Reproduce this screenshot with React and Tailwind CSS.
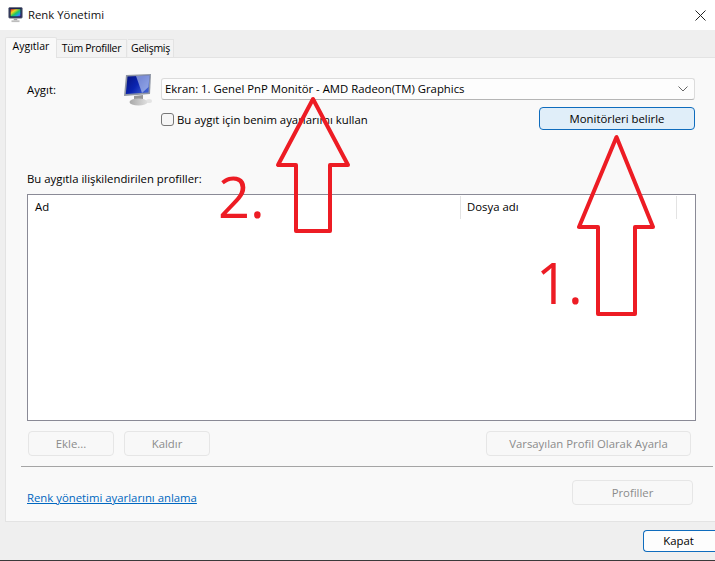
import React from "react";

function TitleIcon() {
  return (
    <svg width="15" height="16" viewBox="0 0 16 18" className="shrink-0">
      <defs>
        <linearGradient id="rb" x1="0" y1="0" x2="1" y2="1">
          <stop offset="0" stopColor="#f02020" />
          <stop offset="0.3" stopColor="#f0d820" />
          <stop offset="0.55" stopColor="#20c860" />
          <stop offset="0.8" stopColor="#20a0f0" />
          <stop offset="1" stopColor="#9020e0" />
        </linearGradient>
      </defs>
      <rect x="0.5" y="0.5" width="15" height="12" rx="1" fill="#1c2550" stroke="#6a6f80" />
      <rect x="2.5" y="2.5" width="11" height="8" fill="url(#rb)" />
      <rect x="6" y="13" width="4" height="2" fill="#a0a0a0" />
      <rect x="3.5" y="15" width="9" height="2" fill="#bdbdbd" />
    </svg>
  );
}

function MonitorIcon() {
  return (
    <svg width="30" height="34" viewBox="0 0 30 34" className="shrink-0">
      <defs>
        <linearGradient id="sc" x1="0" y1="0" x2="1" y2="0.6">
          <stop offset="0" stopColor="#06127e" />
          <stop offset="0.55" stopColor="#0a24b0" />
          <stop offset="1" stopColor="#3c5cd0" />
        </linearGradient>
        <linearGradient id="st" x1="0" y1="0" x2="1" y2="0">
          <stop offset="0" stopColor="#a8a8a8" />
          <stop offset="1" stopColor="#e0e0e0" />
        </linearGradient>
      </defs>
      <path d="M3 2 L28 1 L27 21 L1 23 Z" fill="#8e95a3" />
      <path d="M4.5 3.5 L26.5 2.5 L25.5 19.5 L2.8 21 Z" fill="url(#sc)" />
      <path d="M13 3 L26.5 2.5 L25.5 14 L19 20 Z" fill="#c4d2f2" opacity="0.6" />
      <path d="M11 23 L20 22 L20 27 L11 27 Z" fill="#979797" />
      <ellipse cx="15.5" cy="29" rx="9" ry="3.6" fill="url(#st)" />
      <ellipse cx="26" cy="28" rx="3" ry="2" fill="#dcdcdc" opacity="0.7" />
    </svg>
  );
}

function Btn({ className, children }) {
  return (
    <div className={"flex items-center justify-center rounded-[4px] border border-[#e6e6e6] bg-[#f8f8f8] text-[#8b8b8b] " + className}>
      {children}
    </div>
  );
}

export default function App() {
  return (
    <div className="relative flex h-[561px] w-[715px] flex-col overflow-hidden bg-[#efefef] text-[11.35px] text-black [font-family:'Open_Sans','Noto_Sans',sans-serif]">
      <div className="flex h-[30px] shrink-0 items-center bg-white pl-[8px] pr-[9px]">
        <TitleIcon />
        <span className="ml-[5px] text-[#111]">Renk Yönetimi</span>
        <svg width="11" height="11" viewBox="0 0 11 11" className="ml-auto" stroke="#222" strokeWidth="1" fill="none">
          <path d="M0.5 0.5 L10.5 10.5 M10.5 0.5 L0.5 10.5" />
        </svg>
      </div>

      <div className="z-10 flex h-[27px] shrink-0 items-end pl-[5px]">
        <div className="mb-[-1px] flex h-[21px] w-[52px] items-center justify-center rounded-t-[2px] border border-b-0 border-[#e3e3e3] bg-[#f9f9f9] pb-[2px] text-[10.5px]">Aygıtlar</div>
        <div className="flex h-[18px] w-[70px] items-center justify-center border border-b-0 border-l-0 border-[#e3e3e3] bg-[#f3f3f3] text-[10.5px] tracking-[-0.3px]">Tüm Profiller</div>
        <div className="ml-px flex h-[18px] w-[46px] items-center justify-center border border-b-0 border-l-0 border-[#e3e3e3] bg-[#f3f3f3] text-[10.5px] tracking-[-0.3px]">Gelişmiş</div>
      </div>

      <div className="ml-[5px] flex h-[465px] shrink-0 flex-col border border-r-0 border-[#e3e3e3] bg-[#f9f9f9] pl-[21px] pt-[20px]">
        <div className="flex h-[53px] shrink-0">
          <span className="mt-[3px] w-[96px] shrink-0">Aygıt:</span>
          <div className="mt-[-5px] w-[38px] shrink-0"><MonitorIcon /></div>
          <div className="flex w-[534px] shrink-0 flex-col">
            <div className="flex h-[22px] items-center justify-between rounded-[3px] border border-[#dcdcdc] border-b-[#b5b5b5] bg-[#fdfdfd] pl-[3px] pr-[6px]">
              <span>Ekran: 1. Genel PnP Monitör - AMD Radeon(TM) Graphics</span>
              <svg width="10" height="6" viewBox="0 0 10 6" fill="none" stroke="#666" strokeWidth="1"><path d="M0.5 0.5 L5 5 L9.5 0.5" /></svg>
            </div>
            <div className="mt-[7px] flex items-start justify-between">
              <label className="mt-[4px] flex items-center">
                <span className="h-[13px] w-[13px] rounded-[3px] border border-[#777] bg-[#f6f6f6]" />
                <span className="ml-[3px]">Bu aygıt için benim ayarlarımı kullan</span>
              </label>
              <div className="flex h-[23px] w-[156px] items-center justify-center rounded-[4px] border border-[#0f6cbd] bg-[#e0eef9]">Monitörleri belirle</div>
            </div>
          </div>
        </div>

        <div className="mt-[39px] h-[24px] shrink-0">Bu aygıtla ilişkilendirilen profiller:</div>

        <div className="h-[227px] w-[669px] shrink-0 border border-[#8a8a96] bg-white">
          <div className="flex h-[24px] items-center">
            <span className="w-[432px] pl-[7px]">Ad</span>
            <span className="h-[23px] w-px bg-[#e3e3e3]" />
            <span className="w-[215px] pl-[6px]">Dosya adı</span>
            <span className="h-[23px] w-px bg-[#e3e3e3]" />
          </div>
        </div>

        <div className="mt-[10px] flex h-[25px] shrink-0 items-stretch pl-px">
          <Btn className="w-[86px]">Ekle...</Btn>
          <Btn className="ml-[10px] w-[86px]">Kaldır</Btn>
          <Btn className="ml-[276px] w-[205px]">Varsayılan Profil Olarak Ayarla</Btn>
        </div>

        <div className="ml-[-6px] mt-[10px] h-px w-[692px] shrink-0 bg-[#a5a5a5]" />

        <div className="mt-[13px] flex h-[25px] shrink-0 items-stretch">
          <a className="mt-[9px] w-[545px] text-[#0067c0] underline">Renk yönetimi ayarlarını anlama</a>
          <Btn className="w-[121px]">Profiller</Btn>
        </div>
      </div>

      <div className="flex h-[38px] shrink-0 items-center justify-end">
        <div className="flex h-[22px] w-[72px] items-center justify-center rounded-l-[4px] border border-r-0 border-[#0f6cbd] bg-[#fdfdfd] pr-[2px]">Kapat</div>
      </div>
      <div className="h-px shrink-0 bg-[#3a3a3a]" />

      <svg width="715" height="561" viewBox="0 0 715 561" fill="none" stroke="#ed1c24" strokeWidth="4" strokeLinejoin="round" className="pointer-events-none absolute left-0 top-0">
        <path d="M616.5 137 L579 227 L598 227 L598 314 L635 314 L635 227 L653 227 Z" />
        <path d="M313 99 L278 165 L296 165 L296 231 L330 231 L330 165 L348 165 Z" />
      </svg>
      <span className="absolute left-[218px] top-[160px] text-[56px] font-medium leading-[72px] text-[#ed1c24]">2.</span>
      <span className="absolute left-[536px] top-[246px] text-[56px] font-medium leading-[72px] text-[#ed1c24]">1.</span>
    </div>
  );
}
